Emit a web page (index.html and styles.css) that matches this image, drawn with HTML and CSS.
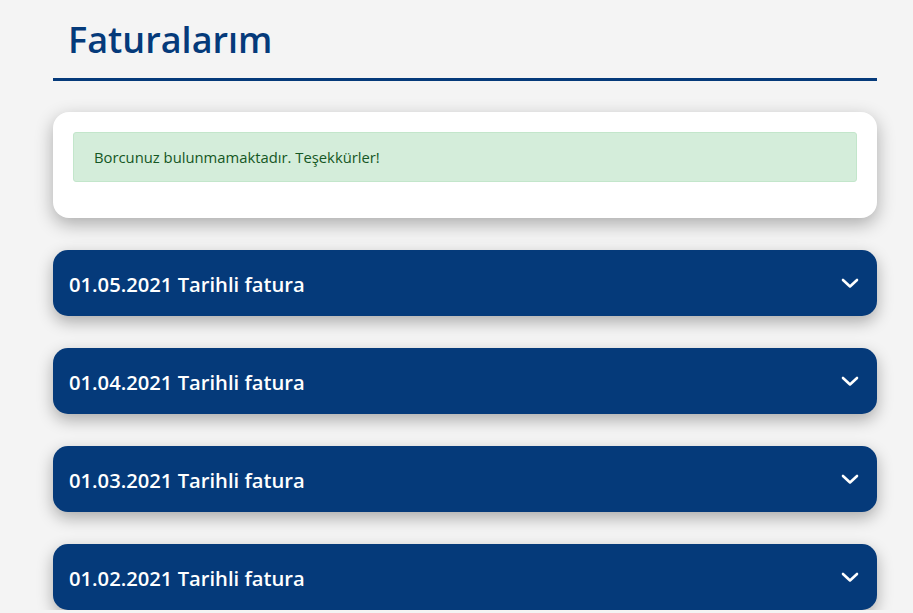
FILE: index.html
```html
<!DOCTYPE html>
<html lang="tr">
<head>
<meta charset="utf-8">
<title>Faturalarım</title>
<link rel="stylesheet" href="styles.css">
</head>
<body>
<main class="page">
  <h1 class="title">Faturalarım</h1>
  <section class="card">
    <div class="alert">Borcunuz bulunmamaktadır. Teşekkürler!</div>
  </section>
  <div class="list">
    <div class="acc"><span class="acc-text">01.05.2021 Tarihli fatura</span><svg class="chev" width="18" height="12" viewBox="0 0 18 12"><path d="M2 3 L9 9.5 L16 3" fill="none" stroke="#fff" stroke-width="2.6" stroke-linecap="round" stroke-linejoin="round"/></svg></div>
    <div class="acc"><span class="acc-text">01.04.2021 Tarihli fatura</span><svg class="chev" width="18" height="12" viewBox="0 0 18 12"><path d="M2 3 L9 9.5 L16 3" fill="none" stroke="#fff" stroke-width="2.6" stroke-linecap="round" stroke-linejoin="round"/></svg></div>
    <div class="acc"><span class="acc-text">01.03.2021 Tarihli fatura</span><svg class="chev" width="18" height="12" viewBox="0 0 18 12"><path d="M2 3 L9 9.5 L16 3" fill="none" stroke="#fff" stroke-width="2.6" stroke-linecap="round" stroke-linejoin="round"/></svg></div>
    <div class="acc"><span class="acc-text">01.02.2021 Tarihli fatura</span><svg class="chev" width="18" height="12" viewBox="0 0 18 12"><path d="M2 3 L9 9.5 L16 3" fill="none" stroke="#fff" stroke-width="2.6" stroke-linecap="round" stroke-linejoin="round"/></svg></div>
  </div>
</main>
</body>
</html>
```
FILE: styles.css
```css
html, body {
  margin: 0;
  padding: 0;
  background: #f4f4f4;
  font-family: "Open Sans", "Noto Sans", sans-serif;
}
.page {
  width: 824px;
  margin-left: 53px;
  padding-top: 15px;
}
.title {
  margin: 0;
  padding: 0 0 13px 15px;
  font-size: 36px;
  line-height: 50px;
  font-weight: 600;
  color: #053a7a;
  border-bottom: 3px solid #053a7a;
}
.card {
  margin-top: 31px;
  background: #fff;
  border-radius: 16px;
  padding: 20px 20px 36px;
  box-shadow: 0 6px 18px rgba(0, 0, 0, 0.3);
}
.alert {
  background: #d4edda;
  border: 1px solid #c3e6cb;
  color: #155724;
  border-radius: 3px;
  padding: 0 20px;
  height: 48px;
  line-height: 48px;
  font-size: 14.8px;
}
.list {
  margin-top: 32px;
  display: flex;
  flex-direction: column;
  gap: 32px;
}
.acc {
  height: 66px;
  background: #053a7a;
  border-radius: 15px;
  display: flex;
  align-items: center;
  justify-content: space-between;
  padding: 0 18px 0 16px;
  box-shadow: 0 6px 16px rgba(0, 0, 0, 0.3);
}
.acc-text {
  color: #fff;
  font-size: 20.2px;
  font-weight: 600;
  padding-top: 2px;
}
.chev {
  display: block;
}
```
